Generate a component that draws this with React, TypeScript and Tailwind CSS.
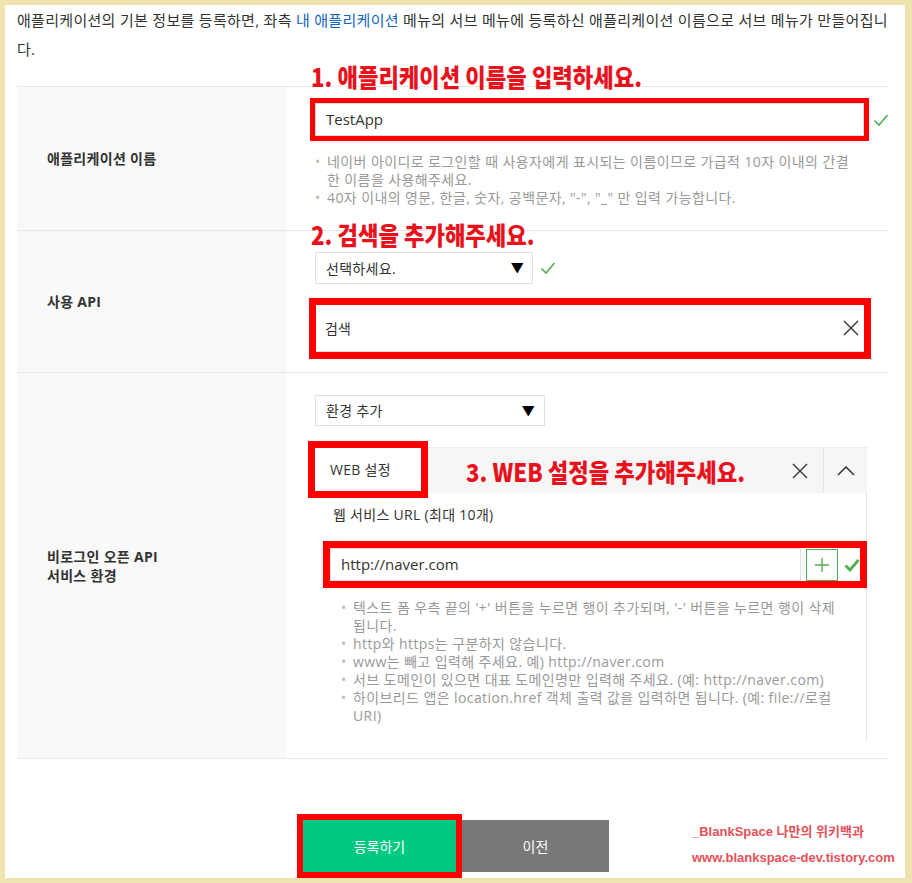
const RED = 'outline-[#ff0000]';

const Check = ({ bold = false }: { bold?: boolean }) => (
  <svg width="16" height="14" viewBox="0 0 16 14" fill="none" stroke="#4caf50" strokeWidth={bold ? 2.8 : 1.6}>
    <polyline points="1.5,7.5 6,12 14.5,2" />
  </svg>
);

const XIcon = () => (
  <svg width="16" height="16" viewBox="0 0 16 16" fill="none" stroke="#333" strokeWidth="1.4">
    <path d="M1 1L15 15M15 1L1 15" />
  </svg>
);

const Note = ({ children }: { children: React.ReactNode }) => (
  <li className="flex whitespace-nowrap">
    <span className="w-[12px] shrink-0 text-[#bbb]">•</span>
    <span>{children}</span>
  </li>
);

const Annot = ({ children, className }: { children: React.ReactNode; className: string }) => (
  <div
    className={`absolute origin-left scale-x-[0.89] whitespace-nowrap text-[25px] leading-[26px] font-black text-[#e8121c] font-['Noto_Sans_CJK_KR',sans-serif] ${className}`}
  >
    {children}
  </div>
);

export default function App() {
  return (
    <div className="w-[912px] h-[883px] bg-[#efe4b0] pt-[5px] pl-[5px] pr-[7px] pb-[5px] font-['Open_Sans','Noto_Sans_CJK_KR',sans-serif] text-[#333]">
      <div className="h-full bg-white pl-[12px] pr-[17px] pt-[1px]">
        <p className="whitespace-nowrap text-[15px] leading-[29px] tracking-[0.3px] text-[#333]">
          애플리케이션의 기본 정보를 등록하면, 좌측 <span className="text-[#1565c0]">내 애플리케이션</span> 메뉴의 서브 메뉴에 등록하신 애플리케이션 이름으로 서브 메뉴가 만들어집니
          <br />다.
        </p>

        <div className="mt-[22px] border-t border-[#e8e8e8]">
          {/* 애플리케이션 이름 */}
          <div className="grid grid-cols-[270px_1fr] border-b border-[#e8e8e8]">
            <div className="flex items-center bg-[#f9f9f9] pl-[30px] text-[14px] font-bold tracking-[0.3px]">애플리케이션 이름</div>
            <div className="relative pl-[28px] pt-[16px] pb-[23px]">
              <Annot className="left-[24px] top-[-24px]">1. 애플리케이션 이름을 입력하세요.</Annot>
              <div className="flex items-center gap-[9px]">
                <div className={`flex h-[33px] w-[549px] items-center border border-[#ddd] pl-[10px] text-[15px] outline-[5px] ${RED}`}>
                  TestApp
                </div>
                <Check />
              </div>
              <ul className="mt-[17px] text-[14px] leading-[18px] tracking-[0.4px] text-[#999]">
                <Note>
                  네이버 아이디로 로그인할 때 사용자에게 표시되는 이름이므로 가급적 10자 이내의 간결
                  <br />한 이름을 사용해주세요.
                </Note>
                <Note>40자 이내의 영문, 한글, 숫자, 공백문자, "-", "_" 만 입력 가능합니다.</Note>
              </ul>
            </div>
          </div>

          {/* 사용 API */}
          <div className="grid grid-cols-[270px_1fr] border-b border-[#e8e8e8]">
            <div className="flex items-center bg-[#f9f9f9] pl-[30px] text-[14px] font-bold tracking-[0.3px]">사용 API</div>
            <div className="relative pl-[28px] pt-[21px] pb-[20px]">
              <Annot className="left-[24px] top-[-10px]">2. 검색을 추가해주세요.</Annot>
              <div className="flex items-center gap-[7px]">
                <div className="flex h-[32px] w-[218px] items-center justify-between border border-[#e0e0e0] pl-[10px] pr-[8px] text-[14px] tracking-[0.3px]">
                  <span>선택하세요.</span>
                  <span className="text-[13px] text-black">▼</span>
                </div>
                <Check />
              </div>
              <div className={`mt-[21px] ml-[1px] flex h-[47px] w-[548px] items-center justify-between border-b border-[#ddd] pl-[9px] pr-[5px] text-[14px] outline-[7px] ${RED}`}>
                <span>검색</span>
                <XIcon />
              </div>
            </div>
          </div>

          {/* 비로그인 오픈 API 서비스 환경 */}
          <div className="grid grid-cols-[270px_1fr] border-b border-[#e8e8e8]">
            <div className="flex items-center bg-[#f9f9f9] pl-[30px] text-[14px] font-bold leading-[19px] tracking-[0.3px]">
              비로그인 오픈 API
              <br />
              서비스 환경
            </div>
            <div className="pl-[28px] pt-[22px] pb-[18px]">
              <div className="flex h-[31px] w-[230px] items-center justify-between border border-[#e0e0e0] pl-[10px] pr-[9px] text-[14px] tracking-[0.3px]">
                <span>환경 추가</span>
                <span className="text-[13px] text-black">▼</span>
              </div>

              <div className="mt-[21px] w-[552px]">
                <div className="relative flex h-[46px] items-stretch border-t border-[#eee] bg-[#f6f6f6]">
                  <div className={`flex h-[43px] w-[106px] items-center bg-white pl-[15px] text-[14px] tracking-[0.3px] outline-[7px] ${RED}`}>
                    WEB 설정
                  </div>
                  <Annot className="left-[151px] top-[10px]">3. WEB 설정을 추가해주세요.</Annot>
                  <div className="ml-auto flex w-[46px] items-center justify-center">
                    <XIcon />
                  </div>
                  <div className="flex w-[44px] items-center justify-center border-l border-[#e4e4e4]">
                    <svg width="18" height="10" viewBox="0 0 18 10" fill="none" stroke="#333" strokeWidth="1.5">
                      <polyline points="1,9 9,1 17,9" />
                    </svg>
                  </div>
                </div>
                <div className="border-r border-[#e4e4e4] pl-[15px] pr-[7px] pt-[12px] pb-[15px]">
                  <div className="pl-[3px] text-[14px] leading-[20px] tracking-[0.3px]">웹 서비스 URL (최대 10개)</div>
                  <div className={`mt-[23px] flex h-[33px] w-[530px] items-center outline-[7px] ${RED}`}>
                    <div className="flex h-[33px] w-[476px] items-center border border-[#ddd] pl-[10px] text-[15px]">
                      http://naver.com
                    </div>
                    <div className="ml-[5px] flex h-[32px] w-[32px] items-center justify-center border border-[#4caf50]">
                      <svg width="14" height="14" viewBox="0 0 14 14" stroke="#4caf50" strokeWidth="1.3">
                        <path d="M7 0V14M0 7H14" />
                      </svg>
                    </div>
                    <div className="ml-[6px]">
                      <Check bold />
                    </div>
                  </div>
                  <ul className="mt-[18px] pl-[11px] text-[14px] leading-[18px] tracking-[0.4px] text-[#999]">
                    <Note>
                      텍스트 폼 우측 끝의 '+' 버튼을 누르면 행이 추가되며, '-' 버튼을 누르면 행이 삭제
                      <br />됩니다.
                    </Note>
                    <Note>http와 https는 구분하지 않습니다.</Note>
                    <Note>www는 빼고 입력해 주세요. 예) http://naver.com</Note>
                    <Note>서브 도메인이 있으면 대표 도메인명만 입력해 주세요. (예: http://naver.com)</Note>
                    <Note>
                      하이브리드 앱은 location.href 객체 출력 값을 입력하면 됩니다. (예: file://로컬
                      <br />URI)
                    </Note>
                  </ul>
                </div>
              </div>
            </div>
          </div>
        </div>

        {/* 버튼 */}
        <div className="relative mt-[61px] flex pl-[286px]">
          <button className={`h-[52px] w-[153px] bg-[#00c982] text-[14px] text-white outline-[6px] ${RED}`}>등록하기</button>
          <button className="ml-[6px] h-[52px] w-[147px] bg-[#787878] text-[14px] text-white">이전</button>
          <div className="absolute left-[675px] top-[-1px] whitespace-nowrap font-['Liberation_Sans','Noto_Sans_CJK_KR',sans-serif] text-[13px] font-bold leading-[26px] text-[#e5505a]">
            <div>_BlankSpace 나만의 위키백과</div>
            <div>www.blankspace-dev.tistory.com</div>
          </div>
        </div>
      </div>
    </div>
  );
}
